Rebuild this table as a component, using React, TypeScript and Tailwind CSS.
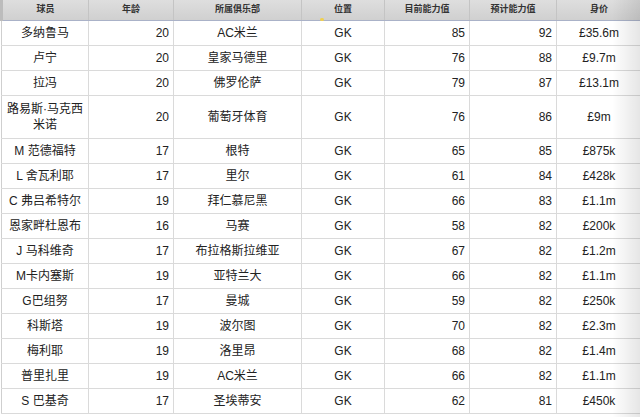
const headers = ["球员", "年龄", "所属俱乐部", "位置", "目前能力值", "预计能力值", "身价"];

type Row = [string, number, string, string, number, number, string];

const rows: Row[] = [
  ["多纳鲁马", 20, "AC米兰", "GK", 85, 92, "£35.6m"],
  ["卢宁", 20, "皇家马德里", "GK", 76, 88, "£9.7m"],
  ["拉冯", 20, "佛罗伦萨", "GK", 79, 87, "£13.1m"],
  ["路易斯·马克西\n米诺", 20, "葡萄牙体育", "GK", 76, 86, "£9m"],
  ["M 范德福特", 17, "根特", "GK", 65, 85, "£875k"],
  ["L 舍瓦利耶", 17, "里尔", "GK", 61, 84, "£428k"],
  ["C 弗吕希特尔", 19, "拜仁慕尼黑", "GK", 66, 83, "£1.1m"],
  ["恩家畔杜恩布", 16, "马赛", "GK", 58, 82, "£200k"],
  ["J 马科维奇", 17, "布拉格斯拉维亚", "GK", 67, 82, "£1.2m"],
  ["M卡内塞斯", 19, "亚特兰大", "GK", 66, 82, "£1.1m"],
  ["G巴组努", 17, "曼城", "GK", 59, 82, "£250k"],
  ["科斯塔", 19, "波尔图", "GK", 70, 82, "£2.3m"],
  ["梅利耶", 19, "洛里昂", "GK", 68, 82, "£1.4m"],
  ["普里扎里", 19, "AC米兰", "GK", 66, 82, "£1.1m"],
  ["S 巴基奇", 17, "圣埃蒂安", "GK", 62, 81, "£450k"],
];

const widths = ["w-[87px]", "w-[85px]", "w-[128px]", "w-[83px]", "w-[85px]", "w-[87px]", "w-[85px]"];
const aligns = ["text-center", "text-right pr-[4px]", "text-center", "text-center", "text-right pr-[4px]", "text-right pr-[4px]", "text-center"];

export default function App() {
  return (
    <div className="relative w-[640px] h-[417px] overflow-hidden bg-white font-['Liberation_Sans','Noto_Sans_CJK_SC',sans-serif] text-[#222]">
      <table className="table-fixed border-collapse w-[640px]">
        <colgroup>
          {widths.map((w, i) => (
            <col key={i} className={w} />
          ))}
        </colgroup>
        <thead>
          <tr className="h-[20px] bg-gradient-to-b from-[#dedede] to-[#d0d0d0]">
            {headers.map((h, i) => (
              <th
                key={h}
                className={`p-0 text-[9px] font-bold text-[#333] text-center border-r border-[#c4c4c4] border-b border-b-[#aab2c8] ${
                  i === 0 ? "border-l-[3px] border-l-[#bcbcbc]" : ""
                }`}
              >
                {h}
              </th>
            ))}
          </tr>
        </thead>
        <tbody>
          {rows.map((r, ri) => (
            <tr key={ri} className={r[0].includes("\n") ? "h-[43px]" : "h-[25px]"}>
              {r.map((c, ci) => (
                <td
                  key={ci}
                  className={`p-0 text-[12px] leading-[16px] whitespace-pre-line border-r border-b border-[#dadada] ${aligns[ci]} ${
                    ci === 0 ? "border-l border-l-[#cfcfcf]" : ""
                  }`}
                >
                  {c}
                </td>
              ))}
            </tr>
          ))}
        </tbody>
      </table>
      <div className="absolute top-0 right-0 w-[28px] h-full bg-gradient-to-r from-transparent to-black/10 pointer-events-none" />
      <div className="absolute top-[18px] left-[320px] w-[4px] h-[3px] bg-[#f0d050] rounded-sm" />
    </div>
  );
}
